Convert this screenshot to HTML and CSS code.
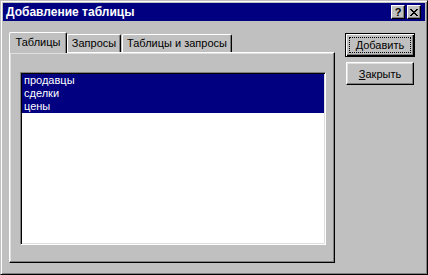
FILE: index.html
```html
<!DOCTYPE html>
<html lang="ru">
<head>
    <meta charset="UTF-8">
    <meta name="viewport" content="width=device-width, initial-scale=1.0">
    <title>Добавление таблицы</title>
    <link rel="stylesheet" href="styles.css">
</head>
<body>

    <div class="window">
        <div class="titlebar">
            <span class="title">Добавление таблицы</span>
            <div class="title-buttons">
                <span class="tbtn help">?</span>
                <span class="tbtn">
                    <svg width="8" height="7" viewBox="0 0 8 7">
                        <path d="M0 0h2v1h1v1h2v-1h1v-1h2v1h-1v1h-1v1h-1v1h1v1h1v1h1v1h-2v-1h-1v-1h-2v1h-1v1h-2v-1h1v-1h1v-1h1v-1h-1v-1h-1v-1h-1z" fill="#000"/>
                    </svg>
                </span>
            </div>
        </div>

        <div class="content">
            <div class="tabarea">
                <div class="tabs">
                    <div class="tab active t1">Таблицы</div>
                    <div class="tab t2">Запросы</div>
                    <div class="tab t3">Таблицы и запросы</div>
                </div>
                <div class="panel">
                    <div class="listbox">
                        <div class="item">продавцы</div>
                        <div class="item">сделки</div>
                        <div class="item">цены</div>
                    </div>
                </div>
            </div>

            <div class="buttons">
                <button class="btn default"><span class="focus"><u>Д</u>обавить</span></button>
                <button class="btn"><u>З</u>акрыть</button>
            </div>
        </div>
    </div>

</body>
</html>
```

FILE: styles.css
```css
*{ box-sizing: border-box; }
html, body{ margin: 0; padding: 0; background-color: #c0c0c0; }
body{
    font-family: "Liberation Sans", Arial, sans-serif;
    font-size: 11px;
    color: #000;
}
.window{
    width: 428px;
    height: 275px;
    background: #c0c0c0;
    border: 1px solid;
    border-color: #c0c0c0 #000 #000 #c0c0c0;
    box-shadow: inset 1px 1px #fff, inset -1px -1px #808080;
    padding: 2px;
}
.titlebar{
    height: 18px;
    background: #000080;
    color: #fff;
    display: flex;
    align-items: center;
    justify-content: space-between;
    padding: 0 4px 0 3px;
}
.title{
    font-weight: bold;
    font-size: 12px;
}
.title-buttons{
    display: flex;
    gap: 2px;
}
.tbtn{
    width: 14px;
    height: 14px;
    background: #c0c0c0;
    border: 1px solid;
    border-color: #fff #000 #000 #fff;
    box-shadow: inset -1px -1px #808080;
    display: flex;
    align-items: center;
    justify-content: center;
    color: #000;
}
.tbtn.help{
    font-weight: bold;
    font-size: 11px;
    line-height: 1;
}
.content{
    display: flex;
    padding: 11px 0 0 6px;
}
.tabs{
    display: flex;
    align-items: flex-end;
    height: 20px;
}
.tab{
    height: 18px;
    line-height: 16px;
    text-align: center;
    border: 1px solid;
    border-color: #fff #000 transparent #fff;
    border-bottom: none;
    border-radius: 2px 2px 0 0;
    box-shadow: inset -1px 0 #808080;
    background: #c0c0c0;
}
.tab.active{
    height: 21px;
    line-height: 18px;
    margin-bottom: -1px;
    position: relative;
    z-index: 1;
}
.t1{ width: 58px; }
.t2{ width: 54px; }
.t3{ width: 110px; margin-left: 1px; }
.panel{
    width: 326px;
    height: 211px;
    border: 1px solid;
    border-color: #fff #000 #000 #fff;
    box-shadow: inset -1px -1px #808080, inset 1px 1px #dfdfdf;
    padding: 19px 0 0 10px;
}
.listbox{
    width: 306px;
    height: 173px;
    background: #fff;
    border: 1px solid;
    border-color: #808080 #fff #fff #808080;
    box-shadow: inset 1px 1px #000, inset -1px -1px #dfdfdf;
    padding: 1px;
}
.item{
    height: 13px;
    line-height: 13px;
    padding-left: 2px;
    background: #000080;
    color: #fff;
}
.buttons{
    display: flex;
    flex-direction: column;
    gap: 5px;
    margin-left: 10px;
    padding-top: 1px;
}
.btn{
    width: 68px;
    height: 23px;
    margin: 0 1px;
    padding: 0;
    font: inherit;
    color: #000;
    background: #c0c0c0;
    border: 1px solid;
    border-color: #fff #000 #000 #fff;
    box-shadow: inset -1px -1px #808080, inset 1px 1px #dfdfdf;
    display: flex;
    align-items: center;
    justify-content: center;
}
.btn.default{
    width: 70px;
    height: 24px;
    margin: 0;
    border-color: #000;
    box-shadow: inset 1px 1px #fff, inset -1px -1px #000, inset -2px -2px #808080;
}
.focus{
    width: 62px;
    height: 16px;
    border: 1px dotted #000;
    display: flex;
    align-items: center;
    justify-content: center;
}
```
